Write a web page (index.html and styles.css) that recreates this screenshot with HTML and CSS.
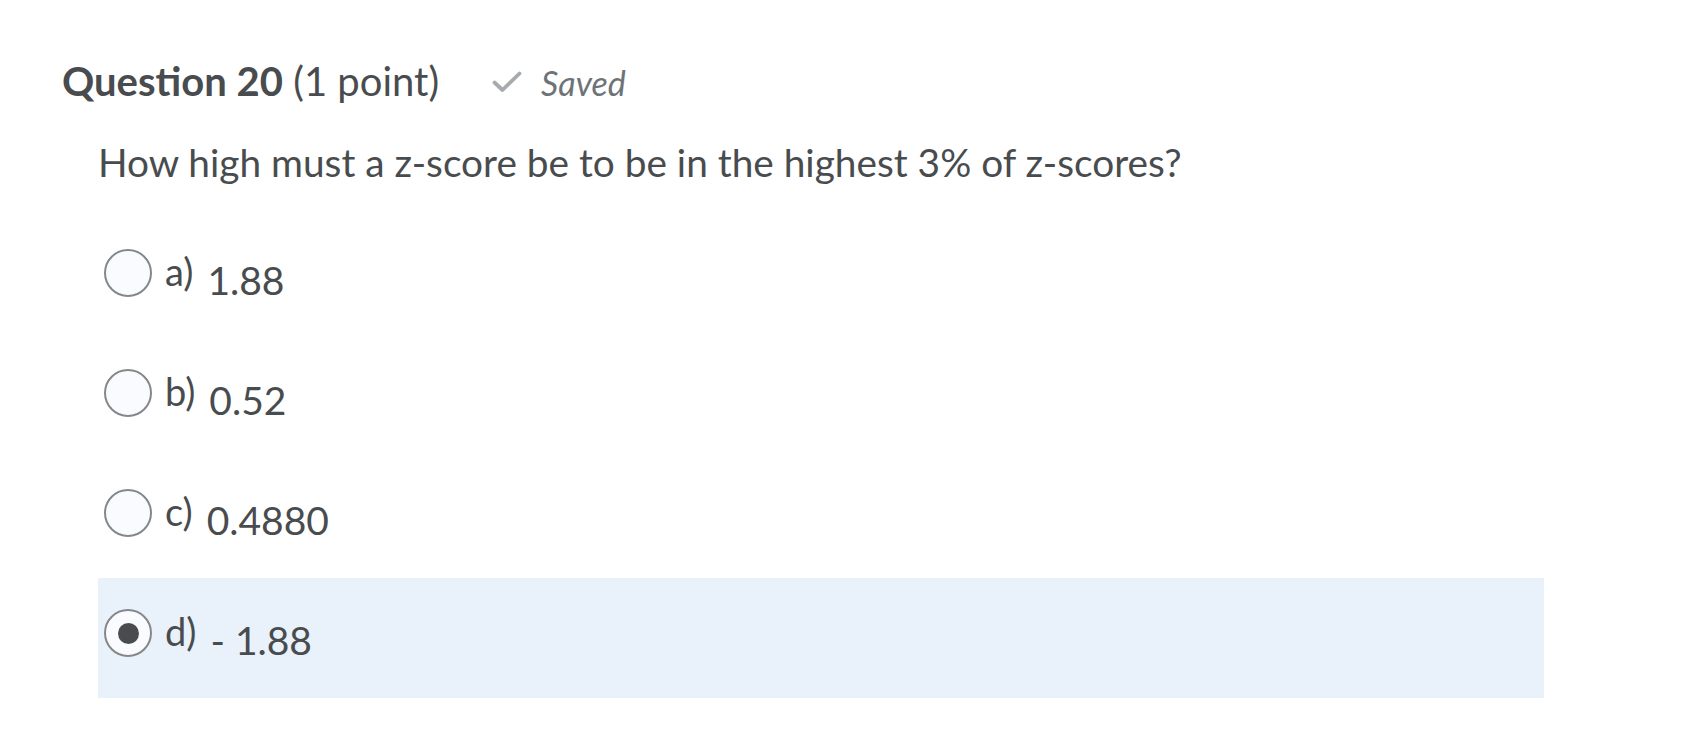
FILE: index.html
```html
<!DOCTYPE html>
<html lang="en">
<head>
<meta charset="utf-8">
<title>Question 20</title>
<link rel="stylesheet" href="styles.css">
</head>
<body>
<div class="page">
  <div class="q-header">
    <h2 class="q-title"><strong>Question 20</strong> (1 point)</h2>
    <div class="saved"><svg class="check" viewBox="0 0 30 22" width="30" height="22" aria-hidden="true"><path d="M2.5 11.5 L10.5 19 L27.5 2.5" fill="none" stroke="#a6abaf" stroke-width="3.8" stroke-linecap="round" stroke-linejoin="round"/></svg><span>Saved</span></div>
  </div>
  <p class="q-text">How high must a z-score be to be in the highest 3% of z-scores?</p>
  <div class="options">
    <label class="option">
      <span class="radio"></span>
      <span class="letter">a)</span>
      <span class="answer">1.88</span>
    </label>
    <label class="option">
      <span class="radio"></span>
      <span class="letter">b)</span>
      <span class="answer">0.52</span>
    </label>
    <label class="option">
      <span class="radio"></span>
      <span class="letter">c)</span>
      <span class="answer">0.4880</span>
    </label>
    <label class="option selected">
      <span class="radio checked"></span>
      <span class="letter">d)</span>
      <span class="answer">- 1.88</span>
    </label>
  </div>
</div>
</body>
</html>
```
FILE: styles.css
```css
html, body {
  margin: 0;
  padding: 0;
  background: #ffffff;
}
body {
  font-family: Lato, "Noto Sans", sans-serif;
  color: #494c4e;
}
.page {
  padding: 57px 0 0 62px;
  width: 1482px;
}
.q-header {
  display: flex;
  align-items: baseline;
  height: 48px;
}
.q-title {
  margin: 0;
  font-size: 40px;
  font-weight: 400;
  line-height: 48px;
}
.q-title strong {
  font-weight: 700;
}
.saved {
  margin-left: 53px;
  color: #6e7377;
  font-style: italic;
  font-size: 34px;
  line-height: 48px;
}
.check {
  vertical-align: 3px;
  margin-right: 19px;
}
.q-text {
  margin: 32px 0 0 36px;
  font-size: 38.8px;
  line-height: 50px;
}
.options {
  margin-top: 31px;
  margin-left: 36px;
  display: flex;
  flex-direction: column;
}
.option {
  display: flex;
  align-items: flex-start;
  height: 120px;
  box-sizing: border-box;
  padding: 31px 0 0 6px;
}
.option.selected {
  background: #e9f1fb;
}
.radio {
  width: 48px;
  height: 48px;
  box-sizing: border-box;
  border: 2px solid #85888b;
  border-radius: 50%;
  background: #f9fbff;
  display: flex;
  align-items: center;
  justify-content: center;
  flex: none;
}
.radio.checked::after {
  content: "";
  width: 21px;
  height: 21px;
  border-radius: 50%;
  background: #494c4e;
}
.letter {
  font-size: 38px;
  line-height: 40px;
  margin-left: 13px;
  margin-top: 2px;
}
.answer {
  font-size: 39px;
  line-height: 40px;
  margin-left: 14px;
  margin-top: 11px;
}
```
